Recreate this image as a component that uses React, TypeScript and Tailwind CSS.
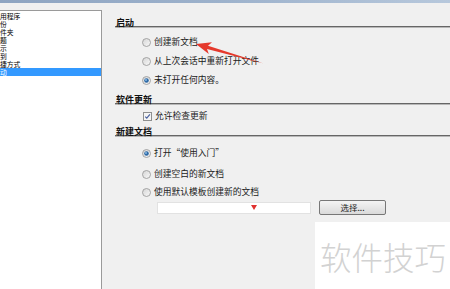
const font = { fontFamily: '"Noto Sans CJK SC", "Liberation Sans", sans-serif' };

const listItems = [
  { label: "用程序" },
  { label: "份" },
  { label: "件夹" },
  { label: "题" },
  { label: "示" },
  { label: "到" },
  { label: "捷方式" },
  { label: "动", selected: true },
];

function Radio({ checked = false }: { checked?: boolean }) {
  return (
    <svg width="9" height="9" viewBox="0 0 9 9" className="shrink-0">
      <defs>
        <linearGradient id={checked ? "rgc" : "rgu"} x1="0" y1="0" x2="1" y2="1">
          <stop offset="0" stopColor="#d4d4d4" />
          <stop offset="1" stopColor="#fafafa" />
        </linearGradient>
      </defs>
      <circle cx="4.5" cy="4.5" r="4" fill={`url(#${checked ? "rgc" : "rgu"})`} stroke="#9c9c9c" strokeWidth="0.9" />
      {checked && <circle cx="4.5" cy="4.5" r="2.3" fill="#2f6aa6" />}
      {checked && <circle cx="4" cy="4" r="0.9" fill="#8fc0ea" />}
    </svg>
  );
}

function Checkbox() {
  return (
    <svg width="9" height="9" viewBox="0 0 9 9" className="shrink-0">
      <rect x="0.5" y="0.5" width="8" height="8" fill="#f4f4f4" stroke="#8e8f8f" />
      <path d="M2.2 4.6 L3.8 6.2 L6.9 2.4" fill="none" stroke="#4b63a2" strokeWidth="1.2" />
    </svg>
  );
}

function Header({ title, className }: { title: string; className: string }) {
  return (
    <div className={`ml-[13px] h-[7px] border-b border-[#666] shadow-[0_1px_0_#b8b8b8] ${className}`}>
      <span className="block pl-[1px] text-[9px] leading-[6px] font-bold text-[#111]">{title}</span>
    </div>
  );
}

function Option({ label, checked, className }: { label: string; checked?: boolean; className: string }) {
  return (
    <div className={`flex h-[12px] items-center gap-[3px] pl-[40px] ${className}`}>
      <Radio checked={checked} />
      <span className="text-[8.75px] leading-[12px] text-[#1a1a1a] whitespace-nowrap">{label}</span>
    </div>
  );
}

export default function App() {
  return (
    <div className="relative flex h-[289px] w-[450px] flex-col overflow-hidden bg-[#f0f0f0]" style={font}>
      {/* title bar edge */}
      <div className="h-[3px] bg-gradient-to-r from-[#8ea4c1] via-[#9db2cc] to-[#b7c8dc]" />

      <div className="flex flex-1">
        {/* category list */}
        <div className="flex w-[102px] shrink-0 flex-col pt-[7px]">
          <div className="flex-1 border-t border-r border-[#9a9a9a] bg-white pt-[1px]">
            {listItems.map((item) => (
              <div
                key={item.label}
                className={`h-[8px] whitespace-nowrap text-[6.8px] leading-[8px] ${
                  item.selected ? "bg-[#3399ff] text-white" : "text-black"
                }`}
              >
                {item.label}
              </div>
            ))}
          </div>
        </div>

        {/* settings */}
        <div className="flex flex-1 flex-col">
          <Header title="启动" className="mt-[17px]" />
          <Option label="创建新文档" className="mt-[9px]" />
          <Option label="从上次会话中重新打开文件" className="mt-[7px]" />
          <Option label="未打开任何内容。" checked className="mt-[7px]" />

          <Header title="软件更新" className="mt-[11px]" />
          <div className="mt-[6px] flex h-[12px] items-center gap-[3px] pl-[41px]">
            <Checkbox />
            <span className="text-[8.75px] leading-[12px] text-[#1a1a1a]">允许检查更新</span>
          </div>

          <Header title="新建文档" className="mt-[7px]" />
          <Option label="打开“使用入门”" checked className="mt-[11px]" />
          <Option label="创建空白的新文档" className="mt-[9px]" />
          <Option label="使用默认模板创建新的文档" className="mt-[6px]" />

          <div className="mt-[2px] flex h-[15px] items-center pl-[55px]">
            <div className="flex h-[12px] w-[154px] items-center border border-[#e2e2e2] bg-white pl-[93px]">
              <svg width="6" height="5" viewBox="0 0 6 5">
                <path d="M0 0 H6 L3 5 Z" fill="#e0312f" />
              </svg>
            </div>
            <button className="ml-[8px] h-[15px] w-[67px] rounded-[2px] border border-[#777] bg-gradient-to-b from-[#f4f4f4] to-[#dadada] text-[8.5px] leading-[13px] text-[#222]">
              选择...
            </button>
          </div>
        </div>
      </div>

      {/* red annotation arrow */}
      <svg className="absolute left-0 top-0" width="450" height="289" viewBox="0 0 450 289">
        <polygon points="196,44 212,42.3 208,45.8 263.5,63.5 207,49 208.8,53.9" fill="#e5392c" />
      </svg>

      {/* watermark */}
      <div className="absolute left-[315px] top-[222px] flex h-[67px] w-[135px] items-center bg-white pl-[5px]">
        <span className="text-[31.5px] font-light leading-[32px] text-[#d2d2d2] whitespace-nowrap">软件技巧</span>
      </div>
    </div>
  );
}
